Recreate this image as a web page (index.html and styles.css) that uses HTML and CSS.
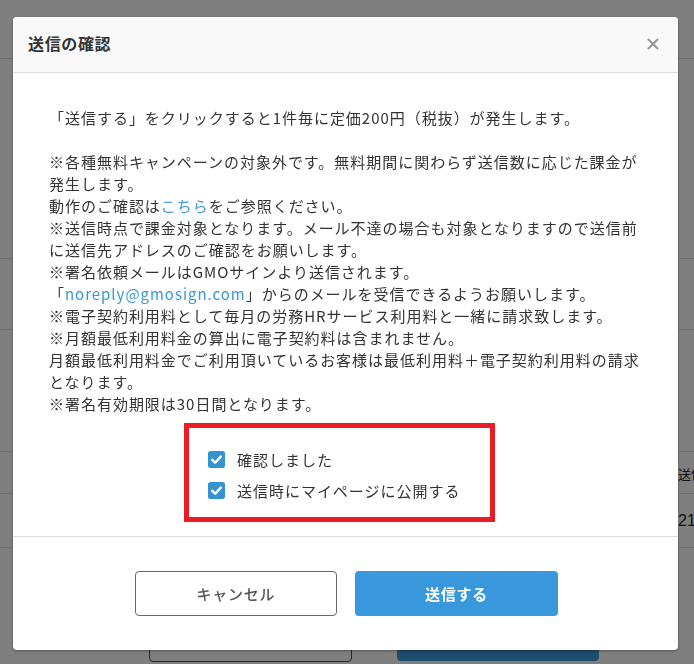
FILE: index.html
```html
<!DOCTYPE html>
<html lang="ja">
<head>
<meta charset="utf-8">
<title>送信の確認</title>
<link rel="stylesheet" href="styles.css">
</head>
<body>
<div class="page">
  <div class="page-top"></div>
  <div class="page-section s1"></div>
  <div class="page-section s2"></div>
  <div class="page-section s3"></div>
  <div class="page-row r1"><span class="cell-spacer"></span><span class="cell">送信日時</span></div>
  <div class="page-row r2"><span class="cell-spacer"></span><span class="cell">21/01/01</span></div>
  <div class="page-actions">
    <span class="page-btn page-btn-outline"></span>
    <span class="page-btn page-btn-primary"></span>
  </div>
</div>

<div class="overlay">
  <div class="modal">
    <div class="modal-header">
      <h2 class="modal-title">送信の確認</h2>
      <span class="modal-close" aria-label="閉じる">
        <svg width="12" height="12" viewBox="0 0 12 12"><path d="M1 1L11 11M11 1L1 11" stroke="#9a9a9a" stroke-width="2.2" stroke-linecap="butt"/></svg>
      </span>
    </div>
    <div class="modal-body">
      <p class="lead">「送信する」をクリックすると1件毎に定価200円（税抜）が発生します。</p>
      <p class="notes">※各種無料キャンペーンの対象外です。無料期間に関わらず送信数に応じた課金が発生します。<br>動作のご確認は<a class="link" href="#">こちら</a>をご参照ください。<br>※送信時点で課金対象となります。メール不達の場合も対象となりますので送信前に送信先アドレスのご確認をお願いします。<br>※署名依頼メールはGMOサインより送信されます。<br>「<a class="link" href="#">noreply@gmosign.com</a>」からのメールを受信できるようお願いします。<br>※電子契約利用料として毎月の労務HRサービス利用料と一緒に請求致します。<br>※月額最低利用料金の算出に電子契約料は含まれません。<br>月額最低利用料金でご利用頂いているお客様は最低利用料＋電子契約利用料の請求となります。<br>※署名有効期限は30日間となります。</p>
      <div class="confirm-box">
        <label class="check-row">
          <span class="check"><svg width="17" height="17" viewBox="0 0 17 17"><rect x="0" y="0" width="17" height="17" rx="2.5" fill="#3593d2"/><path d="M4.2 8.8L7.2 11.6L12.8 5.6" fill="none" stroke="#fff" stroke-width="2.4" stroke-linecap="round" stroke-linejoin="round"/></svg></span>
          <span class="check-label">確認しました</span>
        </label>
        <label class="check-row">
          <span class="check"><svg width="17" height="17" viewBox="0 0 17 17"><rect x="0" y="0" width="17" height="17" rx="2.5" fill="#3593d2"/><path d="M4.2 8.8L7.2 11.6L12.8 5.6" fill="none" stroke="#fff" stroke-width="2.4" stroke-linecap="round" stroke-linejoin="round"/></svg></span>
          <span class="check-label">送信時にマイページに公開する</span>
        </label>
      </div>
    </div>
    <div class="modal-footer">
      <button class="btn btn-cancel" type="button">キャンセル</button>
      <button class="btn btn-send" type="button">送信する</button>
    </div>
  </div>
</div>
</body>
</html>
```

FILE: styles.css
```css
* { box-sizing: border-box; }

html, body {
  margin: 0;
  padding: 0;
}

body {
  width: 694px;
  height: 664px;
  overflow: hidden;
  background: #ffffff;
  font-family: "Noto Sans CJK JP", "Noto Sans", sans-serif;
  color: #333333;
}

/* background page (dimmed by overlay) */
.page {
  display: flex;
  flex-direction: column;
  width: 694px;
  overflow: hidden;
}
.page-top { height: 59px; border-bottom: 1px solid #dedede; }
.page-section { border-bottom: 1px solid #dedede; }
.s1 { height: 200px; }
.s2 { height: 71px; }
.s3 { height: 122px; }
.page-row {
  display: grid;
  grid-template-columns: 678px 16px;
  align-items: center;
  border-bottom: 1px solid #dedede;
  font-size: 13px;
  color: #222;
  white-space: nowrap;
}
.cell { overflow: hidden; }
.r1 { height: 42px; padding-top: 1px; }
.r2 { height: 54px; font-family: "Liberation Sans", sans-serif; font-size: 16px; }
.page-actions {
  display: flex;
  gap: 45px;
  padding: 68px 0 0 149px;
}
.page-btn {
  display: block;
  width: 203px;
  height: 46px;
  border-radius: 4px;
}
.page-btn-outline { border: 1px solid #555; background: #fff; }
.page-btn-primary { width: 202px; height: 42px; margin-top: 3px; background: #3c9ade; }

/* overlay + modal */
.overlay {
  position: fixed;
  inset: 0;
  background: rgba(0, 0, 0, 0.5);
  padding: 17px 0 0 13px;
}

.modal {
  width: 665px;
  height: 633px;
  background: #ffffff;
  border-radius: 4px;
  box-shadow: 0 1px 3px rgba(0, 0, 0, 0.35);
  display: flex;
  flex-direction: column;
  overflow: hidden;
}

.modal-header {
  height: 56px;
  background: #f9f9f9;
  border-bottom: 1px solid #dddddd;
  display: flex;
  align-items: center;
  justify-content: space-between;
  padding: 0 19px 0 15px;
}
.modal-title {
  margin: 0;
  font-size: 16px;
  font-weight: 700;
  letter-spacing: 0.04em;
  color: #333333;
  line-height: 1;
  padding-bottom: 4px;
}
.modal-close {
  display: flex;
  width: 12px;
  height: 12px;
  margin-bottom: 2px;
}

.modal-body {
  padding: 34px 36px 14px 36px;
  border-bottom: 1px solid #dddddd;
}
.modal-body p {
  margin: 0;
  font-size: 15px;
  line-height: 22px;
  letter-spacing: 0.065em;
  color: #333333;
}
.modal-body .lead { margin-bottom: 22px; }
.link { color: #3a97d8; text-decoration: none; }

.confirm-box {
  margin: 8px 0 0 135px;
  width: 311px;
  height: 99px;
  border: 5px solid #ec1c24;
  padding: 16px 0 0 19px;
  display: flex;
  flex-direction: column;
}
.check-row {
  height: 31px;
  display: flex;
  align-items: center;
  gap: 12px;
}
.check { display: flex; width: 17px; height: 17px; }
.check-label {
  font-size: 15px;
  letter-spacing: 0.065em;
  color: #333333;
  line-height: 22px;
}

.modal-footer {
  flex: 1;
  display: flex;
  justify-content: center;
  gap: 18px;
  padding: 34px 0 0 2px;
}
.btn {
  width: 202px;
  height: 45px;
  border-radius: 4px;
  font-family: "Noto Sans CJK JP", "Noto Sans", sans-serif;
  font-size: 15px;
  letter-spacing: 0.05em;
  cursor: pointer;
}
.btn-cancel {
  background: #ffffff;
  border: 1px solid #666666;
  color: #555555;
  font-weight: 500;
}
.btn-send {
  width: 203px;
  background: #3898db;
  border: none;
  color: #ffffff;
  font-weight: 700;
}
```
